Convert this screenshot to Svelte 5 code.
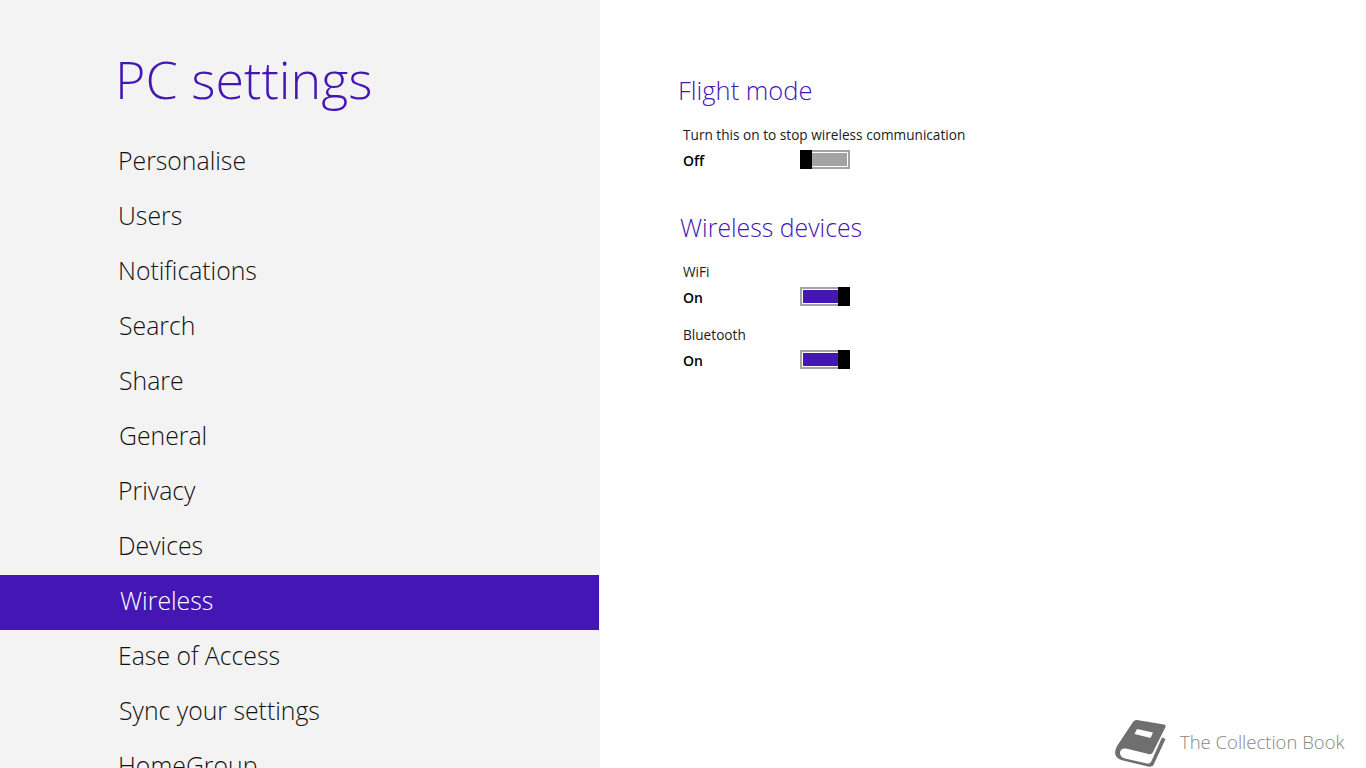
<script>
  const items = [
    ['Personalise', 118], ['Users', 118], ['Notifications', 118], ['Search', 119],
    ['Share', 119], ['General', 119], ['Privacy', 118], ['Devices', 118],
    ['Wireless', 120], ['Ease of Access', 118], ['Sync your settings', 119], ['HomeGroup', 118]
  ];
</script>

<div class="page">
  <aside class="side">
    <h1>PC settings</h1>
    <ul>
      {#each items as [label, x]}
        <li class:active={label === 'Wireless'} style="padding-left: {x}px">{label}</li>
      {/each}
    </ul>
  </aside>

  <main class="main">
    <h2 class="first">Flight mode</h2>
    <div class="setting">
      <div class="label">Turn this on to stop wireless communication</div>
      <div class="row">
        <span class="state">Off</span>
        <span class="switch off"><span class="fill"></span><span class="thumb"></span></span>
      </div>
    </div>

    <h2 class="second">Wireless devices</h2>
    <div class="setting">
      <div class="label">WiFi</div>
      <div class="row">
        <span class="state">On</span>
        <span class="switch on"><span class="fill"></span><span class="thumb"></span></span>
      </div>
    </div>
    <div class="setting next">
      <div class="label">Bluetooth</div>
      <div class="row">
        <span class="state">On</span>
        <span class="switch on"><span class="fill"></span><span class="thumb"></span></span>
      </div>
    </div>
  </main>

  <div class="brand">
    <svg width="54" height="48" viewBox="0 0 54 48" aria-hidden="true">
      <path fill="#6f6f6f" d="M23 1 L50 5.500 C51.500 6 52 7 51.500 8 L39 33 C38 35 36.500 35.500 34.500 35 L12 29.500 C8 29 6 31 6 34 C6 37 8 38.500 11 39.500 L33 44.500 C35 45 36.500 44 37.500 42 L48 18.500 L51.500 20 L39.500 46 C38.500 47.500 36 48 34 47.500 L9 41.500 C3 40 0 36 1.500 31 C2 29 3 27 4 25.500 L19 3 C20 1.500 21.500 0.800 23 1 Z"/>
      <path fill="#ffffff" d="M23 10 L39 13.500 L36.500 19 L20.500 15 Z"/>
    </svg>
    <span>The Collection Book</span>
  </div>
</div>

<style>
  :global(body) {
    margin: 0;
    background: #ffffff;
  }
  .page {
    position: relative;
    display: flex;
    width: 1366px;
    height: 768px;
    overflow: hidden;
    background: #ffffff;
    font-family: "Open Sans", "Noto Sans", sans-serif;
  }
  .side {
    flex: 0 0 600px;
    height: 768px;
    overflow: hidden;
    background: #f3f3f3;
  }
  h1 {
    margin: 0;
    padding: 44px 0 0 115px;
    height: 91px;
    font-size: 52px;
    line-height: 70px;
    font-weight: 300;
    color: #4416b4;
  }
  ul {
    list-style: none;
    margin: 0;
    padding: 0;
  }
  li {
    width: 599px;
    box-sizing: border-box;
    height: 55px;
    line-height: 50px;
    font-size: 24.800px;
    font-weight: 300;
    color: #111111;
  }
  li.active {
    background: #4416b4;
    color: #ffffff;
  }
  .main {
    flex: 1;
    padding: 72px 0 0 78px;
  }
  h2 {
    margin: 0;
    font-weight: 300;
    font-size: 25.500px;
    line-height: 36px;
    color: #4416b4;
  }
  h2.second {
    margin: 40px 0 0 2px;
    font-size: 24.800px;
  }
  .setting {
    margin: 17px 0 0 5px;
  }
  .setting.next {
    margin-top: 19px;
  }
  .label {
    font-size: 13.650px;
    line-height: 20px;
    color: #1a1a1a;
  }
  .row {
    display: flex;
    align-items: center;
    height: 19px;
    margin-top: 5px;
  }
  .state {
    width: 117px;
    font-size: 14px;
    font-weight: 600;
    line-height: 19px;
    padding-top: 2px;
    color: #000000;
  }
  .switch {
    display: flex;
    position: relative;
    width: 50px;
    height: 19px;
    box-sizing: border-box;
    border: 2px solid #a3a3a3;
    background: #ffffff;
    padding: 1px;
  }
  .fill {
    flex: 1;
  }
  .switch.off .fill {
    background: #a3a3a3;
    margin-left: 9px;
  }
  .switch.on .fill {
    background: #4416b4;
    margin-right: 9px;
  }
  .thumb {
    position: absolute;
    top: -2px;
    width: 12px;
    height: 19px;
    background: #000000;
  }
  .switch.off .thumb {
    left: -2px;
  }
  .switch.on .thumb {
    right: -2px;
  }
  .brand {
    position: absolute;
    left: 1114px;
    top: 719px;
    display: flex;
    align-items: center;
    gap: 12px;
    color: #858585;
    font-size: 18.500px;
    font-weight: 300;
    white-space: nowrap;
  }
  .brand span {
    margin-top: -4px;
  }
</style>
